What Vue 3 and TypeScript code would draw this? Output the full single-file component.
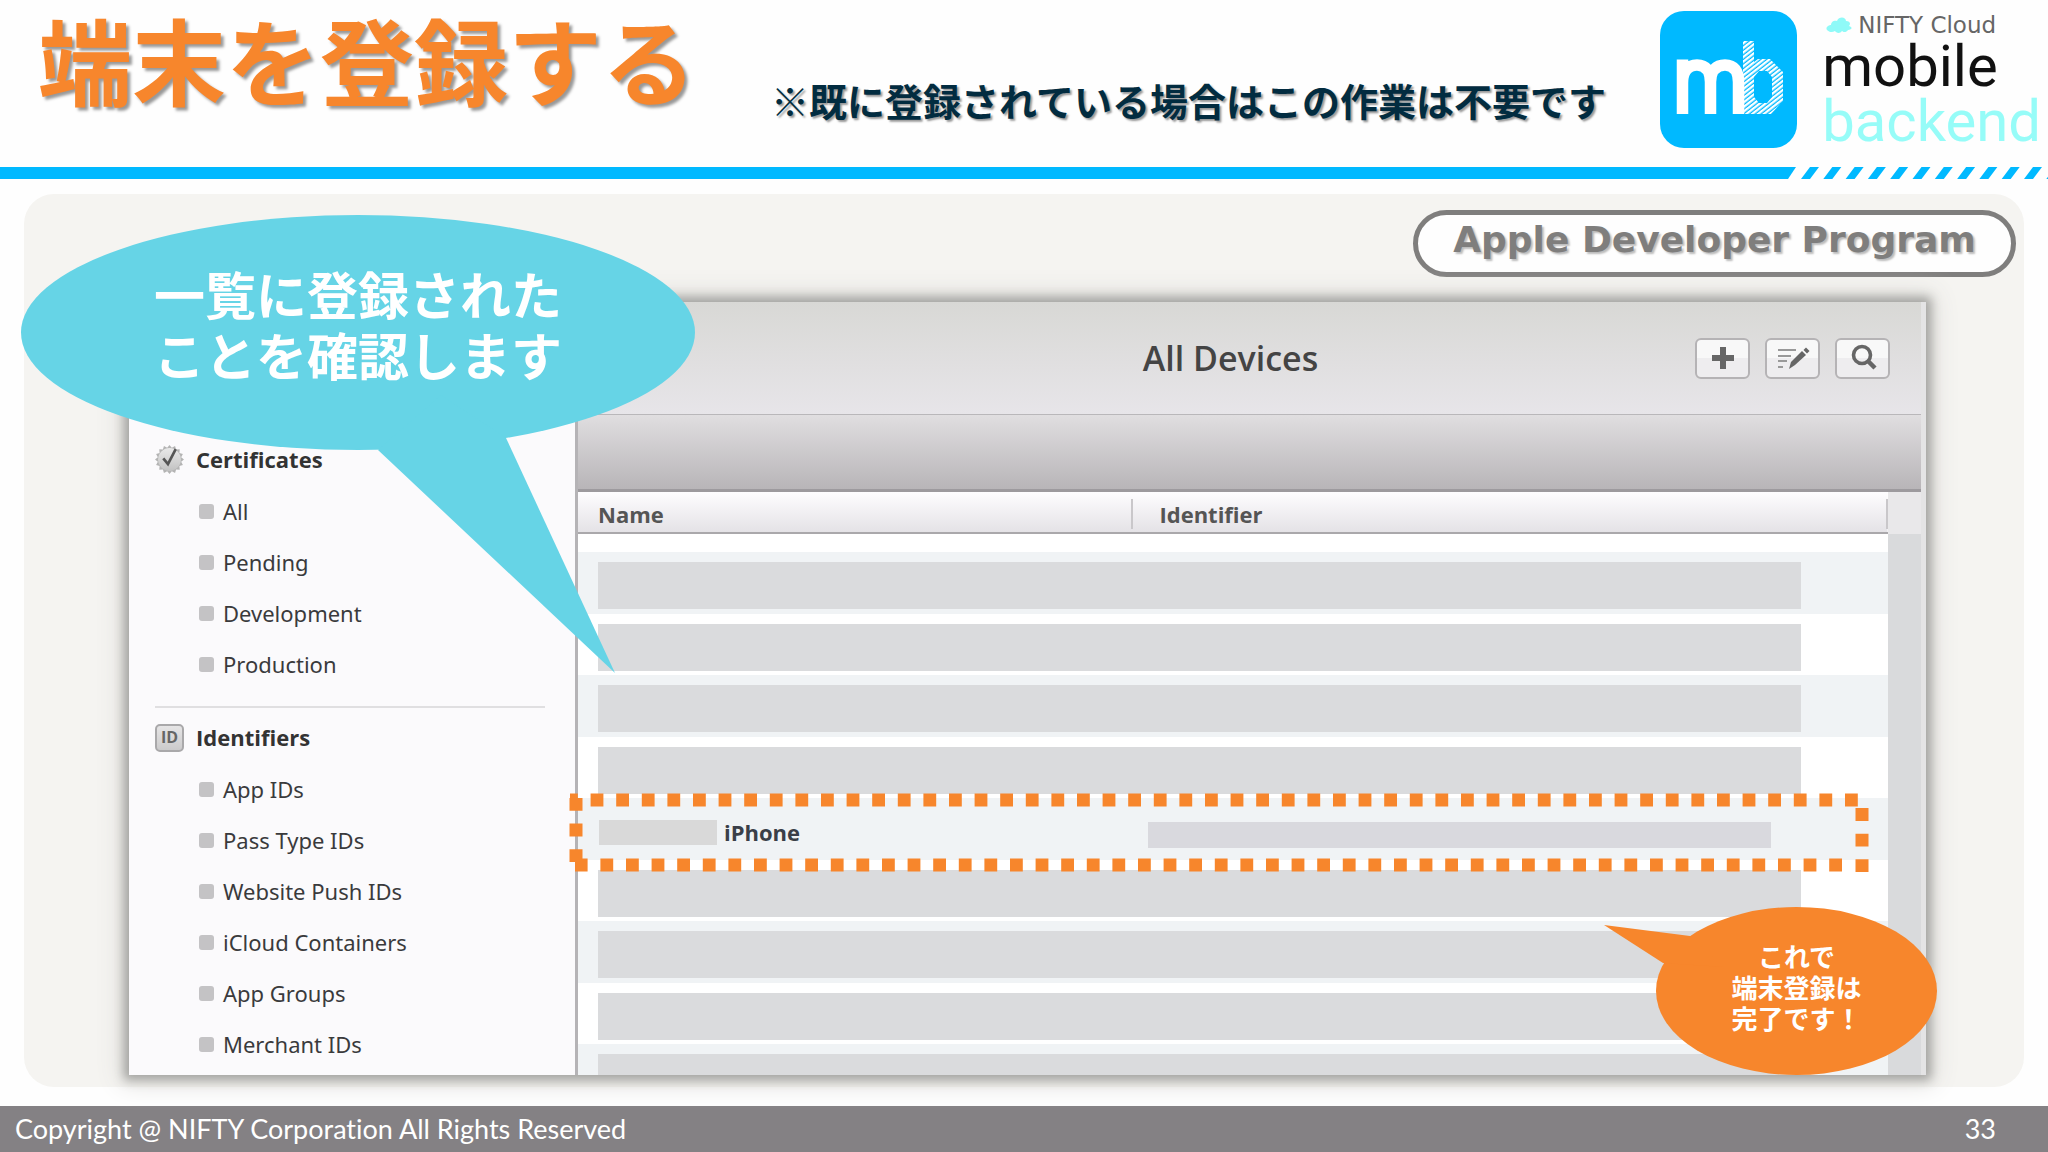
<script setup lang="ts">
interface SideGroup {
  title: string
  icon: 'seal' | 'id'
  items: string[]
}

const groups: SideGroup[] = [
  { title: 'Certificates', icon: 'seal', items: ['All', 'Pending', 'Development', 'Production'] },
  {
    title: 'Identifiers',
    icon: 'id',
    items: ['App IDs', 'Pass Type IDs', 'Website Push IDs', 'iCloud Containers', 'App Groups', 'Merchant IDs'],
  },
]

type Row = 'masked' | 'device'
const rows: Row[] = ['masked', 'masked', 'masked', 'masked', 'device', 'masked', 'masked', 'masked', 'masked']

// Slanted stripes that finish the header rule
const stripes = Array.from({ length: 12 }, (_, i) => {
  const x = 13 + i * 22.3
  return `${x},12 ${x + 9},0 ${x + 18},0 ${x + 9},12`
})

// Toothed rim of the certificate seal
const seal = Array.from({ length: 32 }, (_, i) => {
  const r = i % 2 ? 11.5 : 14
  const a = (i * Math.PI) / 16
  return `${(14 + r * Math.sin(a)).toFixed(2)},${(14 - r * Math.cos(a)).toFixed(2)}`
}).join(' ')
</script>

<template>
  <div class="slide">
    <header class="head">
      <h1 class="title">端末を登録する</h1>
      <p class="note">※既に登録されている場合はこの作業は不要です</p>
      <div class="brand">
        <svg class="mark" viewBox="0 0 137 137" aria-hidden="true">
          <defs>
            <pattern id="hatch" width="8" height="3.6" patternUnits="userSpaceOnUse" patternTransform="rotate(-38)">
              <rect width="8" height="2.3" fill="#fff" />
            </pattern>
          </defs>
          <rect width="137" height="137" rx="24" fill="#00b9ff" />
          <path
            d="M22.5 103V48.5M22.5 72C22.5 60 28 54 37 54S50.500 60 50.500 71V103M50.500 71C50.500 60 56 54 65 54S78.500 60 78.500 71V103"
            fill="none"
            stroke="#fff"
            stroke-width="11.500"
          />
          <path
            d="M83 30H94V51L98 48H110L123 61V90L111 103H83ZM94 66V86L99 92H107L112 86V66L107 60H99Z"
            fill="url(#hatch)"
            fill-rule="evenodd"
          />
        </svg>
        <div class="words">
          <div class="nifty">
            <svg class="cloud" viewBox="0 0 26 16" aria-hidden="true">
              <path d="M1 13C-1 10 3 8 5 8C5 4 9 3 11 4C13-1 20 0 20 4C24 4 25 7 23 9C27 10 26 13 22 13C20 16 17 15 16 14C14 17 10 16 9 14C6 16 3 15 1 13Z" fill="#8ffaf8" />
            </svg>
            <span>NIFTY Cloud</span>
          </div>
          <div class="mobile">mobile</div>
          <div class="backend">backend</div>
        </div>
      </div>
    </header>

    <div class="rule">
      <div class="rule-solid"></div>
      <svg class="rule-tail" viewBox="0 0 260 12" aria-hidden="true">
        <polygon points="0,0 8,0 0,12" />
        <polygon v-for="p in stripes" :key="p" :points="p" />
      </svg>
    </div>

    <main class="main">
      <section class="panel">
        <div class="pill">Apple Developer Program</div>

        <div class="window">
          <nav class="side">
            <div v-for="g in groups" :key="g.title" class="group">
              <h3 class="group-title">
                <svg v-if="g.icon === 'seal'" class="group-icon" viewBox="0 0 28 28" aria-hidden="true">
                  <defs>
                    <linearGradient id="metal" x1="0" y1="0" x2="0" y2="1">
                      <stop offset="0" stop-color="#e9e9e9" />
                      <stop offset="1" stop-color="#c2c2c2" />
                    </linearGradient>
                  </defs>
                  <polygon :points="seal" fill="#b4b4b4" />
                  <circle cx="14" cy="14" r="11" fill="url(#metal)" />
                  <path d="M8 13L12.500 18.500L20 4" fill="none" stroke="#555" stroke-width="2.600" />
                </svg>
                <span v-else class="group-icon badge">ID</span>
                {{ g.title }}
              </h3>
              <ul class="items">
                <li v-for="item in g.items" :key="item"><a href="#">{{ item }}</a></li>
              </ul>
            </div>
          </nav>

          <div class="content">
            <div class="bar">
              <h2 class="bar-title">All Devices</h2>
              <div class="tools">
                <button type="button" aria-label="Add">
                  <svg viewBox="0 0 32 26" aria-hidden="true"><path d="M16 2V24M5 13H27" stroke="#666" stroke-width="6" /></svg>
                </button>
                <button type="button" aria-label="Edit">
                  <svg viewBox="0 0 32 26" aria-hidden="true">
                    <path d="M1 5H19M1 11H14M1 16H10M1 22H6" stroke="#999" stroke-width="2" />
                    <path d="M12 24L14 17L25 6L29 10L18 20Z" fill="#666" />
                    <path d="M26.500 5L29 2.500L32.500 6L30 8.500Z" fill="#666" />
                  </svg>
                </button>
                <button type="button" aria-label="Search">
                  <svg viewBox="0 0 32 26" aria-hidden="true">
                    <circle cx="15" cy="10" r="8.500" fill="none" stroke="#666" stroke-width="3.600" />
                    <path d="M20.500 15.500L28 23" stroke="#666" stroke-width="4.500" />
                  </svg>
                </button>
              </div>
            </div>
            <div class="strip"></div>

            <div class="list">
              <table class="table">
                <thead>
                  <tr>
                    <th class="col-name">Name</th>
                    <th class="col-id">Identifier</th>
                  </tr>
                </thead>
                <tbody>
                  <tr class="spacer"><td colspan="2"></td></tr>
                  <tr v-for="(row, i) in rows" :key="i" :class="{ odd: i % 2 === 0, device: row === 'device' }">
                    <template v-if="row === 'device'">
                      <td class="device-name">
                        <div class="device-line"><span class="mask-short"></span>iPhone</div>
                        <svg class="focus" aria-hidden="true">
                          <line x1="-6" y1="0" x2="100%" y2="0" stroke-dashoffset="5" />
                          <line x1="100%" y1="0" x2="100%" y2="72" stroke-dashoffset="17.500" />
                          <svg x="100%" y="65" overflow="visible">
                            <line x1="-20" y1="0" x2="-1287" y2="0" />
                          </svg>
                          <line x1="0" y1="62" x2="0" y2="-2" />
                        </svg>
                      </td>
                      <td class="device-id"><div class="mask-id"></div></td>
                    </template>
                    <td v-else colspan="2" class="masked"><div class="mask"></div></td>
                  </tr>
                </tbody>
              </table>
              <div class="scroll"></div>
            </div>
          </div>
        </div>

        <div class="callout blue">
          <svg viewBox="0 0 674 458" aria-hidden="true">
            <ellipse cx="337" cy="117.500" rx="337" ry="117.500" />
            <polygon points="357,235 594,458 485,223 420,180" />
          </svg>
          <p>一覧に登録された<br />ことを確認します</p>
        </div>

        <div class="callout orange">
          <svg viewBox="0 0 333 168" aria-hidden="true">
            <ellipse cx="192.500" cy="84" rx="140.500" ry="84" />
            <polygon points="0,18 86,29 120,60 59,56" />
          </svg>
          <p>これで<br />端末登録は<br />完了です！</p>
        </div>
      </section>
    </main>

    <footer class="foot">
      <span>Copyright @ NIFTY Corporation All Rights Reserved</span>
      <span>33</span>
    </footer>
  </div>
</template>

<style>
body {
  margin: 0;
  background: #fff;
}
</style>

<style scoped>
.slide {
  display: flex;
  flex-direction: column;
  min-height: 100vh;
  background: #fefefe;
  font-family: 'Open Sans', 'Noto Sans CJK JP', sans-serif;
}
h1, h2, h3, p, ul {
  margin: 0;
  padding: 0;
}
.head {
  display: flex;
  align-items: flex-start;
  height: 167px;
  padding-left: 38px;
  box-sizing: border-box;
  white-space: nowrap;
}
.title {
  padding-top: 11px;
  font: 700 94px/112px 'Liberation Sans', 'Noto Sans CJK JP', sans-serif;
  color: #f7862c;
  text-shadow: 3px 3px 3px #999;
}
.note {
  margin-left: 75px;
  padding-top: 74px;
  font: 700 38px/52px 'Noto Sans CJK JP', sans-serif;
  color: #022c40;
  text-shadow: 2px 2px 2px #999;
}
.brand {
  display: flex;
  gap: 25px;
  margin-left: auto;
  padding: 11px 7px 0 0;
}
.mark {
  width: 137px;
  height: 137px;
}
.words {
  font-family: Roboto, sans-serif;
  font-size: 58px;
  line-height: 55px;
}
.nifty {
  display: flex;
  align-items: center;
  gap: 6px;
  height: 28px;
  padding-left: 4px;
  font: 400 23px/28px 'DejaVu Sans', sans-serif;
  color: #666;
}
.cloud {
  width: 26px;
  height: 16px;
}
.mobile {
  color: #111;
}
.backend {
  color: #96fcf8;
}
.rule {
  display: flex;
  height: 12px;
}
.rule-solid {
  flex: 1;
  background: #00b9ff;
}
.rule-tail {
  width: 260px;
  height: 12px;
  fill: #00b9ff;
}
.main {
  display: flex;
  flex: 1;
  padding: 15px 24px 19px;
}
.panel {
  position: relative;
  display: flex;
  flex: 1;
  flex-direction: column;
  min-width: 0;
  border-radius: 30px;
  background: #f5f4f1;
}
.pill {
  align-self: flex-end;
  width: 603px;
  height: 67px;
  margin: 16px 8px 0 0;
  box-sizing: border-box;
  border: 5px solid #7f7e7d;
  border-radius: 34px;
  background: #fefefe;
  font: 700 36px/50px 'DejaVu Sans', sans-serif;
  color: #7f7e7d;
  text-align: center;
  text-shadow: 2px 2px 2px #bbb;
}
.window {
  display: flex;
  flex: 1;
  margin: 25px 98px 12px 105px;
  box-shadow: 0 0 10px 5px #a3a3a0, 0 0 24px 8px #dddcd9;
}
.side {
  flex: 0 0 449px;
  box-sizing: border-box;
  padding: 132px 30px 0 26px;
  border-right: 3px solid #b5b3b6;
  background: #fbfafc;
  color: #333;
}
.group + .group {
  border-top: 2px solid #e0dfe1;
  margin-top: 17px;
  padding-top: 4px;
}
.group-title {
  display: flex;
  align-items: center;
  gap: 12px;
  height: 51px;
  font-size: 22px;
  font-weight: 700;
  line-height: 51px;
}
.group-icon {
  width: 29px;
  height: 29px;
}
.badge {
  box-sizing: border-box;
  height: 28px;
  border: 2px solid #a9a8aa;
  border-radius: 5px;
  background: linear-gradient(#e6e5e6, #cbcacb);
  font: 700 16px/23px 'Open Sans', sans-serif;
  text-align: center;
  color: #666;
}
.items {
  list-style: none;
}
.items li {
  height: 51px;
  padding-left: 44px;
  line-height: 52px;
}
.items a {
  display: flex;
  align-items: center;
  gap: 9px;
  font-family: 'Noto Sans', sans-serif;
  font-size: 22px;
  color: #3a3a3c;
  text-decoration: none;
  white-space: nowrap;
}
.items a::before {
  content: '';
  width: 15px;
  height: 15px;
  border-radius: 3px;
  background: #c4c3c5;
}
.content {
  display: flex;
  flex: 1;
  flex-direction: column;
  min-width: 0;
  border-right: 5px solid #e4e4e5;
}
.bar {
  display: flex;
  align-items: center;
  height: 113px;
  box-sizing: border-box;
  padding-right: 31px;
  border-bottom: 1px solid #b9b7ba;
  background: linear-gradient(#d8d8d5, #e7e5e9);
}
.bar-title {
  flex: 1;
  padding-left: 188px;
  font-size: 34px;
  line-height: 46px;
  font-weight: 600;
  text-align: center;
  color: #444;
}
.tools {
  display: flex;
  gap: 15px;
}
.tools button {
  display: flex;
  align-items: center;
  justify-content: center;
  width: 55px;
  height: 41px;
  padding: 0;
  border: 2px solid #b5b3b5;
  border-radius: 6px;
  background: linear-gradient(#f8f8f8 50%, #eeedef 50%);
}
.tools svg {
  width: 32px;
  height: 26px;
  overflow: visible;
}
.strip {
  height: 77px;
  box-sizing: border-box;
  border-bottom: 3px solid #9d9a9e;
  background: linear-gradient(#e0dee0, #b8b5b8);
}
.list {
  display: flex;
  flex: 1;
}
.table {
  flex: 1;
  border-collapse: collapse;
  table-layout: fixed;
  background: #fff;
}
.table td, .table th {
  padding: 0;
}
.table thead tr {
  height: 42px;
  background: linear-gradient(#fefdff, #e3e1e5);
  box-shadow: inset 0 -2px #aaa8ab;
}
.table th {
  padding-top: 2px;
  font-size: 22px;
  line-height: 30px;
  font-weight: 700;
  text-align: left;
  color: #555;
  background: linear-gradient(#c9c7ca, #c9c7ca) no-repeat right 7px / 2px 30px;
}
.table th.col-name {
  width: 42.4%;
  padding-left: 20px;
}
.table th.col-id {
  padding-left: 26px;
}
.table tbody tr {
  height: 61px;
}
.table tbody tr.odd {
  height: 62px;
  background: #f0f3f5;
}
.table tbody tr.spacer {
  height: 18px;
}
.table tbody tr:last-child {
  height: 31px;
}
.table td.masked {
  padding: 10px 87px 0 20px;
  vertical-align: top;
}
.mask {
  height: 47px;
  background: #dadbdd;
}
tr:last-child .mask {
  height: 21px;
}
.device {
  position: relative;
}
.table td.device-name {
  padding: 6px 0 0 21px;
}
.device-line {
  display: flex;
  align-items: center;
  gap: 7px;
  font-size: 22px;
  line-height: 30px;
  font-weight: 700;
  color: #3a3f48;
}
.mask-short {
  width: 118px;
  height: 25px;
  background: #d9d9d9;
}
.table td.device-id {
  padding: 12px 117px 0 15px;
}
.mask-id {
  height: 26px;
  background: #d9d9de;
}
.focus {
  position: absolute;
  top: 2px;
  left: -2px;
  width: calc(100% - 24px);
  height: 65px;
  overflow: visible;
  stroke: #f7862c;
  stroke-width: 13;
  stroke-dasharray: 12.8 12.8;
}
.scroll {
  width: 33px;
  background: linear-gradient(#e9e8ea, #e9e8ea) no-repeat top / 100% 42px, #d9dadc;
}
.callout {
  position: absolute;
}
.callout svg {
  display: block;
  width: 100%;
}
.callout p {
  position: absolute;
  left: 0;
  width: 100%;
  font-family: 'Liberation Sans', 'Noto Sans CJK JP', sans-serif;
  font-weight: 700;
  text-align: center;
  color: #fff;
}
.blue {
  top: 21px;
  left: -3px;
  width: 674px;
  fill: #66d4e6;
}
.blue p {
  top: 52px;
  font-size: 51px;
  line-height: 61px;
}
.orange {
  right: 87px;
  bottom: 12px;
  width: 333px;
  fill: #f7862c;
}
.orange p {
  top: 36px;
  box-sizing: border-box;
  padding-left: 52px;
  font-size: 26px;
  line-height: 31px;
}
.foot {
  display: flex;
  align-items: center;
  justify-content: space-between;
  height: 46px;
  padding: 0 52px 0 15px;
  background: #848184;
  font: 400 27px/48px Lato, sans-serif;
  font-variant-ligatures: none;
  color: #fff;
}
</style>
